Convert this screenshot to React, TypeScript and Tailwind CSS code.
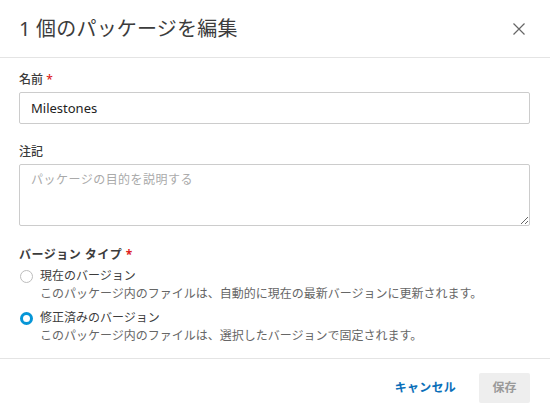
import { useState } from 'react'

const font = { fontFamily: '"Noto Sans", "Noto Sans CJK JP", sans-serif' }

function Radio({ checked }: { checked: boolean }) {
  return checked ? (
    <span className="box-border inline-block h-[13px] w-[13px] shrink-0 rounded-full border-[3px] border-[#0696d7] bg-white" />
  ) : (
    <span className="box-border inline-block h-[13px] w-[13px] shrink-0 rounded-full border border-[#bdbdbd] bg-white" />
  )
}

export default function App() {
  const [version, setVersion] = useState('fixed')

  const options = [
    {
      id: 'current',
      label: '現在のバージョン',
      description: 'このパッケージ内のファイルは、自動的に現在の最新バージョンに更新されます。',
    },
    {
      id: 'fixed',
      label: '修正済みのバージョン',
      description: 'このパッケージ内のファイルは、選択したバージョンで固定されます。',
    },
  ]

  return (
    <div className="h-[415px] w-[550px] overflow-hidden bg-white text-[#3c3c3c]" style={font}>
      {/* header */}
      <div className="flex h-[58px] items-center justify-between border-b border-[#e4e4e4] pl-[19px] pr-[24px]">
        <h1 className="text-[20px] font-normal tracking-[0.01em] text-[#3c3c3c]">1 個のパッケージを編集</h1>
        <button className="flex h-[14px] w-[14px] items-center justify-center text-[#666]">
          <svg viewBox="0 0 12 12" className="h-[12px] w-[12px]" fill="none" stroke="currentColor" strokeWidth={1.2}>
            <path d="M0.5 0.5 L11.5 11.5 M11.5 0.5 L0.5 11.5" />
          </svg>
        </button>
      </div>

      {/* body */}
      <div className="border-b border-[#e4e4e4] pb-[13px] pl-[19px] pr-[20px] pt-[14px]">
        <label className="block text-[12px] leading-[16px] font-medium">
          名前 <span className="text-[#dd2222]">*</span>
        </label>
        <input
          className="mt-[4px] box-border block h-[32px] w-full rounded-[2px] border border-[#cccccc] px-[11px] text-[13px] text-[#222] outline-none"
          defaultValue="Milestones"
          style={font}
        />

        <label className="mt-[20px] block text-[12px] leading-[16px] font-medium">注記</label>
        <textarea
          className="mt-[4px] box-border block h-[62px] w-full rounded-[2px] border border-[#cccccc] px-[11px] py-[6px] text-[12px] tracking-[0.04em] placeholder:text-[#aaaaaa] outline-none"
          placeholder="パッケージの目的を説明する"
          style={font}
        />

        <div className="mt-[21px] text-[12px] leading-[16px] font-bold tracking-[0.04em]">
          バージョン タイプ <span className="text-[#dd2222]">*</span>
        </div>

        <div className="mt-[4px] flex flex-col gap-[6px]">
          {options.map((opt) => (
            <div key={opt.id} className="cursor-pointer" onClick={() => setVersion(opt.id)}>
              <div className="flex items-center gap-[7px] pl-[1px]">
                <Radio checked={version === opt.id} />
                <span className="text-[12px] leading-[18px]">{opt.label}</span>
              </div>
              <div className="pl-[21px] text-[12px] leading-[18px] text-[#666]">{opt.description}</div>
            </div>
          ))}
        </div>
      </div>

      {/* footer */}
      <div className="flex items-center justify-end gap-[23px] pr-[20px] pt-[14px]">
        <button className="text-[12px] font-bold tracking-[0.02em] text-[#0a6fb9]">キャンセル</button>
        <button
          className="h-[30px] w-[51px] rounded-[2px] bg-[#eeeeee] text-[12px] font-bold text-[#9a9a9a]"
          disabled
        >
          保存
        </button>
      </div>
    </div>
  )
}
